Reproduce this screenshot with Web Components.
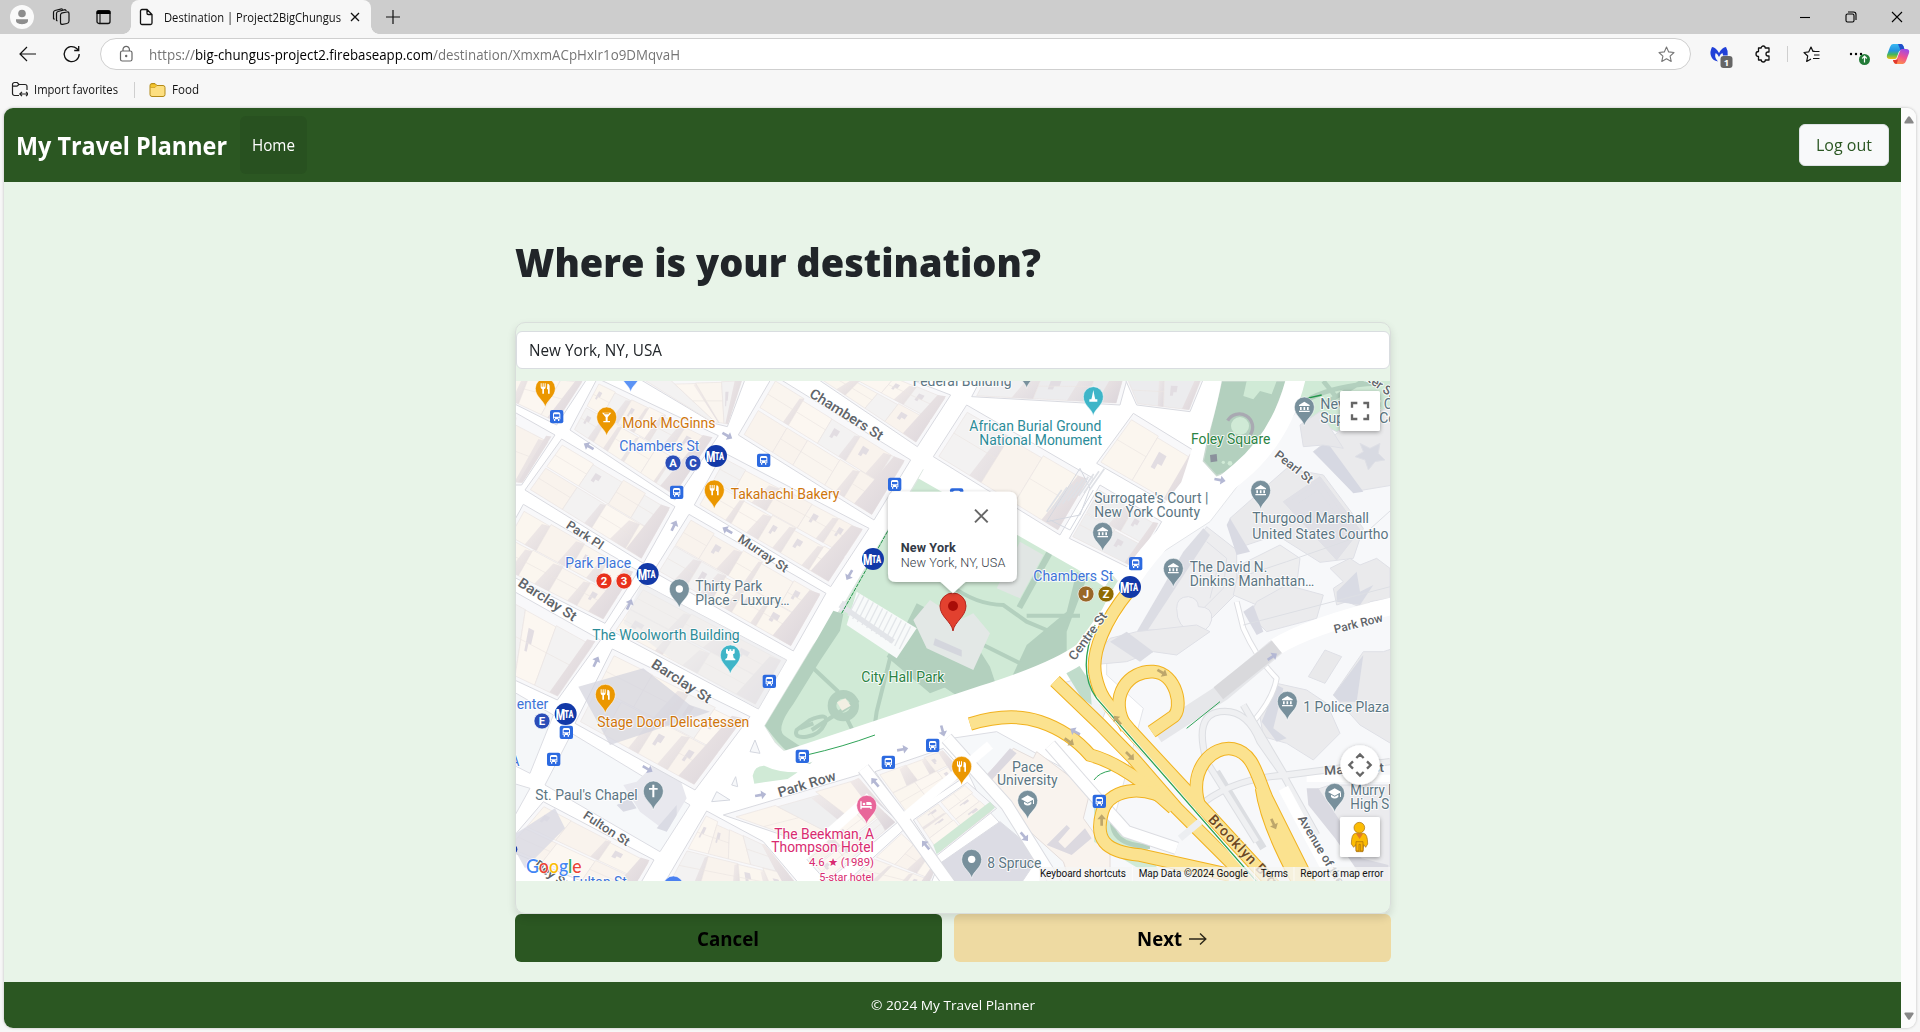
<!DOCTYPE html>
<html lang="en">
<head>
<meta charset="utf-8">
<title>Destination | Project2BigChungus</title>
<style>
html,body{margin:0;height:100%;overflow:hidden;background:#f7f7f7}
body{font-family:"Open Sans","Noto Sans",sans-serif;color:#212529}
</style>
</head>
<body>
<browser-window></browser-window>
<script>
const define = (name, html, ready) => customElements.define(name, class extends HTMLElement {
  connectedCallback() {
    if (this.shadowRoot) return;
    this.attachShadow({mode: 'open'}).innerHTML = html;
    if (ready) ready.call(this, this.shadowRoot);
  }
});

/* Text run condensed or widened to an exact width. */
customElements.define('fit-text', class extends HTMLElement {
  connectedCallback() {
    if (this.shadowRoot) return;
    this.attachShadow({mode: 'open'}).innerHTML =
      '<style>:host{display:inline-block;white-space:pre;flex:none}span{display:inline-block;transform-origin:0 50%}</style><span><slot></slot></span>';
    requestAnimationFrame(() => this.fit());
    this.fit();
  }
  fit() {
    const w = +this.getAttribute('w'), s = this.shadowRoot.querySelector('span');
    s.style.transform = 'none';
    const n = s.getBoundingClientRect().width;
    if (!w || !n) return;
    s.style.transform = 'scaleX(' + w / n + ')';
    this.style.width = w + 'px';
  }
});

define('tab-strip', `
<style>
:host{display:flex;height:34px;background:#cdcdcd;align-items:center;box-sizing:border-box;font-size:12px;color:#111}
svg{display:block;flex:none}
.left{display:flex;width:131px;align-items:center;padding-left:10px;box-sizing:border-box}
.left svg+svg{margin-left:16px}
.tab{position:relative;display:flex;align-items:center;width:240px;height:34px;background:#f7f7f7;border-radius:8px 8px 0 0;box-sizing:border-box;padding-left:8px}
.tab:before,.tab:after{content:"";position:absolute;bottom:0;width:8px;height:8px}
.tab:before{left:-8px;background:radial-gradient(circle at 0 0,transparent 7.5px,#f7f7f7 8px)}
.tab:after{right:-8px;background:radial-gradient(circle at 100% 0,transparent 7.5px,#f7f7f7 8px)}
.tab fit-text{margin-left:10px}
.x{margin-left:8px}.plus{margin-left:14px}
.win{margin-left:auto;display:flex;padding-right:14px;gap:28px}
</style>
<div class="left">
<svg width="24" height="24"><circle cx="12" cy="12" r="12" fill="#fafafa"/><circle cx="12" cy="8.500" r="3.800" fill="#8d8d8d"/><path d="M6 14.200h12v1.600c0 2-2.700 3.400-6 3.400s-6-1.400-6-3.400z" fill="#8d8d8d"/></svg>
<svg width="24" height="20" viewBox="0 0 24 20" fill="none" stroke="#111" stroke-width="1.200"><rect x="10.500" y="5" width="8.500" height="11.500" rx="2" transform="skewY(-10) translate(0 3)"/><path d="M7.500 14l-1-.500V6.500a2 2 0 0 1 1.500-2l7-1.800 1.500 1"/><path d="M4.500 12.500L3.500 11.500V5.500A2 2 0 0 1 5 3.500l6.500-1.700 1.500.700"/></svg>
<svg width="16" height="16" style="margin-left:21px"><rect x="2" y="2" width="13" height="12.500" rx="2" fill="none" stroke="#111" stroke-width="1.300"/><path d="M1.500 2.500q0-1.200 2-1.200h10q2 0 2 1.200V5H1.500z"/><path d="M5 5v9" stroke="#111" stroke-width="1.100"/></svg>
</div>
<div class="tab">
<svg width="15" height="18" fill="none" stroke="#111" stroke-width="1.300"><path d="M1.500 3a1.500 1.500 0 0 1 1.500-1.500h5l5 5V15a1.500 1.500 0 0 1-1.500 1.500H3A1.500 1.500 0 0 1 1.500 15zM8 1.500v3.700a1.300 1.300 0 0 0 1.300 1.300H13"/></svg>
<fit-text w="177">Destination | Project2BigChungus</fit-text>
<svg class="x" width="12" height="12" stroke="#111" stroke-width="1.300"><path d="M2 2l8 8M10 2l-8 8"/></svg>
</div>
<svg class="plus" width="16" height="16" stroke="#111" stroke-width="1.200"><path d="M8 1v14M1 8h14"/></svg>
<div class="win">
<svg width="18" height="16" stroke="#000" stroke-width="1.100"><path d="M4 8.500h10"/></svg>
<svg width="18" height="16" fill="none" stroke="#000" stroke-width="1.100"><rect x="4" y="5" width="8" height="8" rx="1.500"/><path d="M6 3h5.500a2.500 2.500 0 0 1 2.500 2.500V11"/></svg>
<svg width="18" height="16" stroke="#000" stroke-width="1.100"><path d="M4 3l10 10M14 3L4 13"/></svg>
</div>`);

define('address-bar', `
<style>
:host{display:flex;height:40px;align-items:center;padding:0 0 0 18px;background:#f7f7f7;font-size:14px;color:#757575}
svg{display:block;flex:none;overflow:visible}
.field{display:flex;flex:none;align-items:center;margin-left:19px;width:1591px;height:32px;box-sizing:border-box;border:1px solid #cfcfcf;border-radius:16px;background:#fff;padding:0 15px 0 17px}
.field .host{color:#000}
.lock{margin-right:14px}.star{margin-left:auto}
.tools{display:flex;align-items:center;margin-left:16px;flex:1}
i{width:1px;height:16px;background:#cfcfcf}
</style>
<svg width="20" height="18" fill="none" stroke="#111" stroke-width="1.200"><path d="M18 9H2.500M9 2L2 9l7 7"/></svg>
<svg width="18" height="18" fill="none" stroke="#111" stroke-width="1.300" style="margin-left:25px"><path d="M16.200 9a7.500 7.500 0 1 1-2.500-5.500l1.800 1.700M15.700 1v4.500h-4.500"/></svg>
<div class="field">
<svg class="lock" width="17" height="18" fill="none" stroke="#666" stroke-width="1.200" viewBox="0 0 17 18"><rect x="2.500" y="6" width="11.500" height="10" rx="1.800"/><path d="M5 6V4.500a3.200 3.200 0 0 1 6.400 0V6"/><circle cx="8.200" cy="11" r=".6" fill="#666"/></svg>
<fit-text w="46">https://</fit-text><fit-text class="host" w="238">big-chungus-project2.firebaseapp.com</fit-text><fit-text w="247">/destination/XmxmACpHxIr1o9DMqvaH</fit-text>
<svg class="star" width="17" height="17" viewBox="0 0 17 17" fill="none" stroke="#777" stroke-width="1.100"><path d="M8.500 1l2.200 4.900 5.300.600-3.900 3.600 1.100 5.300-4.700-2.700-4.700 2.700 1.100-5.300L1 6.500l5.300-.600z" stroke-linejoin="round"/></svg>
</div>
<div class="tools">
<svg width="24" height="24" viewBox="0 0 24 24"><path d="M5 5q4 .5 7 6 3-5.500 7-6 2 3 1.700 8.500h-4.700q0-1.500-.700-2.500-2 1-3.300 4-1.300-3-3.300-4-2 4.500 2.300 8.500-5.500-1-7-5.500Q2.500 10 5 5z" fill="#2140d8"/><rect x="13.500" y="14" width="12" height="12" rx="3" fill="#666"/><text x="19.500" y="23.500" text-anchor="middle" font-size="9.500" font-weight="700" fill="#fff">1</text></svg>
<svg width="17" height="18" viewBox="0 0 17 18" fill="none" stroke="#111" stroke-width="1.300" style="margin-left:24px"><path d="M3.500 3h2.700a2 2 0 0 1 4 0H14v4h-1a2 2 0 0 0 0 4h1v4h-3.700a2 2 0 0 1-4 0H3.500v-3.500a2.500 2.500 0 0 1 0-5z" stroke-linejoin="round"/></svg>
<i style="margin-left:15px"></i>
<svg width="18" height="17" viewBox="0 0 18 17" fill="none" stroke="#111" stroke-width="1.200" style="margin-left:15px"><path d="M11.500 5L10 5.500 8 1 5.800 5.800 1 6.500l3.700 3.500-1 5.500 4.300-2.500M10.500 5.500h6M11 9h5.500M10 12.500h6.500" stroke-linejoin="round"/></svg>
<svg width="24" height="24" viewBox="0 0 24 24" style="margin-left:26px"><circle cx="4" cy="12" r="1.200"/><circle cx="9" cy="12" r="1.200"/><circle cx="14" cy="12" r="1.200"/><circle cx="17.500" cy="17.500" r="5.500" fill="#237b38"/><path d="M17.500 20.500v-6M15.200 16.500l2.300-2.300 2.300 2.300" stroke="#fff" stroke-width="1.200" fill="none"/></svg>
<svg width="24" height="24" viewBox="0 0 24 24" style="margin-left:15px"><defs><linearGradient id="a" x1="0" y1="0" x2="0" y2="1"><stop stop-color="#39b9f2"/><stop offset=".45" stop-color="#2493df"/><stop offset=".7" stop-color="#47b65b"/><stop offset="1" stop-color="#f0c30e"/></linearGradient><linearGradient id="b" x1=".7" y1="0" x2=".3" y2="1"><stop stop-color="#9c4be8"/><stop offset=".5" stop-color="#f0518f"/><stop offset="1" stop-color="#ff9446"/></linearGradient></defs><path d="M7 2h8q2 0 3 4l1 2h-3q-3 0-4 4l-1.500 4q-.500 1-2 1H4q-4 0-3-4L4 5q1-3 3-3z" fill="url(#a)"/><path d="M12 2h3q2 0 3 4l.500 2h-4z" fill="#214fc9"/><path d="M17 22H10q-2 0-3-4h2q2 0 3-4l2-5q.500-2 2-2h4q4 0 3 4l-3 8q-1 3-3 3z" fill="url(#b)"/><path d="M7 18h3q1.500 0 2-1l-1 4.500q-3 1-4-3.500z" fill="#e2382f"/></svg>
</div>`);

define('favorites-bar', `
<style>
:host{display:flex;height:34px;align-items:center;padding-left:11px;background:#f7f7f7;font-size:12px;color:#111;box-sizing:border-box;padding-bottom:3px}
svg{flex:none;margin-right:6px}i{width:1px;height:16px;background:#cfcfcf;margin:0 14px 0 16px}
</style>
<svg width="17" height="17" fill="none" stroke="#222" stroke-width="1.200"><path d="M8 14.500H3.500a2 2 0 0 1-2-2v-9a2 2 0 0 1 2-2h2.700L8 3.500h6a2 2 0 0 1 2 2V9M1.500 5.200H6l2-1.700M9 13h8M11 10.800L8.800 13l2.200 2.200M15 10.800l2.200 2.200-2.200 2.200"/></svg>
<fit-text w="84">Import favorites</fit-text><i></i>
<svg width="17" height="16"><path d="M1 3.500A2 2 0 0 1 3 1.500h3l2 2h6a2 2 0 0 1 2 2v7a2 2 0 0 1-2 2H3a2 2 0 0 1-2-2z" fill="#fddf80" stroke="#b38a18"/><path d="M1.500 5.500V3.500A1.500 1.500 0 0 1 3 2h3l1.700 1.700L6 5.500z" fill="#f4c62f" stroke="#c39519" stroke-width=".6"/></svg>
<fit-text w="27">Food</fit-text>`);

define('planner-header', `
<style>
:host{display:flex;height:74px;flex:none;background:#2b5722;align-items:center;padding:0 12px 0 12px;box-sizing:border-box;color:#fff}
.brand{font-size:25px;font-weight:700}
nav{margin-left:13px;width:67px;height:58px;border-radius:6px;background:#285120;display:flex;align-items:center;justify-content:center;font-size:15.500px}
button{margin-left:auto;width:90px;height:42px;border:1px solid #dfe3e6;border-radius:6px;background:#f8f9fa;color:#2b5722;font:500 16px "Open Sans";padding:0}
</style>
<fit-text class="brand" w="211">My Travel Planner</fit-text><nav><fit-text w="43">Home</fit-text></nav>
<button><fit-text w="56">Log out</fit-text></button>`);

define('destination-card', `
<style>
:host{display:flex;flex-direction:column;width:876px;height:592px;box-sizing:border-box;border:1px solid #d9dedb;border-radius:10px;box-shadow:0 4px 9px rgba(0,0,0,.12);padding-top:8px;position:relative;z-index:1}
.input{height:38px;box-sizing:border-box;border:1px solid #d9dde0;border-radius:6px;background:#fff;display:flex;align-items:center;padding-left:12px;font-size:15.500px;margin-bottom:12px;flex:none}
</style>
<div class="input"><fit-text w="133">New York, NY, USA</fit-text></div><city-map></city-map>`);

define('planner-page', `
<style>
:host{display:flex;flex-direction:column;flex:1;background:#e8f4e8}
main{flex:1;display:flex;flex-direction:column;align-items:center}
h1{width:876px;margin:55px 0 0;height:85px;font-size:39.500px;line-height:50px;font-weight:800}
.row{width:876px;display:flex;gap:12px;height:48px}
.btn{display:flex;align-items:center;justify-content:center;border-radius:6px;font-size:20px;font-weight:700;color:#000;box-sizing:border-box}
.cancel{width:427px;background:#2b5722}.next{flex:1;background:#eedaa2;gap:7px}
.next svg{margin-top:2px}
footer{height:46px;background:#2b5722;color:#fff;display:flex;align-items:center;justify-content:center;font-size:13.500px}
</style>
<planner-header></planner-header>
<main><h1><fit-text w="526">Where is your destination?</fit-text></h1>
<destination-card></destination-card>
<div class="row"><div class="btn cancel"><fit-text w="62">Cancel</fit-text></div>
<div class="btn next"><fit-text w="45">Next</fit-text><svg width="18" height="14" fill="none" stroke="#2b2618" stroke-width="1.400"><path d="M0 7h16.500M11 1.500L16.800 7 11 12.500"/></svg></div></div></main>
<footer><fit-text w="164">© 2024 My Travel Planner</fit-text></footer>`);

define('browser-window', `
<style>
:host{display:flex;flex-direction:column;height:1032px;width:1920px;background:#f7f7f7}
.view{display:flex;margin:0 4px;height:920px;border-radius:9px;overflow:hidden;box-shadow:0 0 3px rgba(0,0,0,.25)}
.bar{width:15px;background:#fcfcfc;display:flex;flex-direction:column;justify-content:space-between;align-items:center;padding:8px 0;box-sizing:border-box}
</style>
<tab-strip></tab-strip><address-bar></address-bar><favorites-bar></favorites-bar>
<div class="view"><planner-page></planner-page><div class="bar">
<svg width="10" height="8"><path d="M4 .8q1-1 2 0L9.500 6q.500 1.500-1 1.500h-7Q0 7.500.500 6z" fill="#888"/></svg>
<svg width="10" height="8"><path d="M4 7.200q1 1 2 0L9.500 2Q10 .5 8.500.5h-7Q0 .5.500 2z" fill="#888"/></svg></div></div>`);

/* The map is drawn in units of a third of a pixel. */
const lerp = (a, b, t) => [a[0] + (b[0] - a[0]) * t, a[1] + (b[1] - a[1]) * t];
const pts = p => p.map(q => q.map(v => v.toFixed(1)).join(',')).join(' ');
const CREAM = ['#faf5ef', '#fbf6ef', '#f9f3ed', '#fcf7f1', '#f3f2f2'];
const GREY = ['#eeeeef', '#ececee', '#f0f0f1', '#ebebed'];
function block(q, n, m, pal, seed) {
  let r = seed * 7919 + 13;
  const rnd = () => (r = (r * 1103515245 + 12345) % 2147483648) / 2147483648;
  const at = (u, v) => lerp(lerp(q[0], q[1], u), lerp(q[3], q[2], u), v);
  let s = `<polygon points="${pts(q)}" fill="#f8f8fa" stroke="#d9dae0" stroke-width="3"/>`;
  for (let j = 0; j < m; j++) {
    let u = .03;
    for (let i = 0; i < n; i++) {
      const w = .94 / n * (.75 + rnd() * .5), u1 = i === n - 1 ? .97 : Math.min(.97, u + w);
      const v0 = .05 + j * .9 / m, v1 = v0 + .9 / m, d = rnd() * .12 * (v1 - v0);
      const c = pal[Math.floor(rnd() * pal.length)];
      s += `<polygon points="${pts([at(u, v0 + d), at(u1, v0 + d), at(u1, v1), at(u, v1)])}" fill="${c}" stroke="#eae4e2" stroke-width="2"/>`;
      const k = (u1 - u) * (.1 + rnd() * .2);
      if (rnd() > .35) s += `<polygon points="${pts([at(u1 - k, v0 + d + .03), at(u1, v0 + d), at(u1, v1), at(u1 - k * 1.6, v1)])}" fill="url(#shade)" opacity=".75"/>`;
      if (rnd() > .6) { const a = u + (u1 - u) * .2, b = v0 + (v1 - v0) * .3, e = (u1 - u) * .2, f = (v1 - v0) * .2;
        s += `<polygon points="${pts([at(a, b), at(a + e, b), at(a + e, b + f), at(a + e * .5, b + f), at(a + e * .5, b + f * 1.6), at(a, b + f * 1.6)])}" fill="#e2dde2"/>`; }
      if (rnd() > .4) s += `<polyline points="${pts([at(u, (v0 + v1) / 2), at(u1, (v0 + v1) / 2)])}" stroke="#ebe5e3" stroke-width="2" fill="none"/>`;
      u = u1;
    }
  }
  /* Long shadow that the row throws on its eastern side. */
  s += `<polygon points="${pts([at(.9, .08), at(.97, .05), at(.97, .95), at(.84, .95)])}" fill="url(#shade)"/>`;
  return s;
}
const flat = (p, f, st = '#dcdde3') => `<polygon points="${p}" fill="${f}" stroke="${st}" stroke-width="3"/>`;

const blocks = [
  [[[-60,-20],[232,10],[140,150],[-60,50]],3,1,CREAM,1],
  [[[262,10],[625,182],[495,375],[180,165]],6,2,CREAM,2],
  [[[385,10],[710,0],[652,155],[612,145]],4,1,CREAM,3],
  [[[155,192],[495,395],[400,565],[45,345]],4,2,CREAM,4],
  [[[-60,70],[135,180],[35,330],[-60,330]],2,1,CREAM,5],
  [[[40,388],[385,588],[285,745],[-60,570]],4,2,CREAM,6],
  [[[790,0],[1202,255],[1092,435],[685,180]],5,2,CREAM,7],
  [[[640,232],[1077,460],[962,635],[553,390]],5,2,CREAM,8],
  [[[537,418],[948,655],[850,828],[430,590]],5,2,CREAM,9],
  [[[395,625],[830,855],[745,1002],[300,765]],3,2,CREAM,10],
  [[[307,822],[720,1025],[555,1245],[195,1045]],4,2,CREAM,11],
  [[[-40,620],[272,795],[142,975],[-40,890]],3,1,CREAM,12],
  [[[100,1280],[432,1455],[360,1580],[-20,1420]],3,2,CREAM,15],
  [[[1010,-60],[1322,60],[1222,215],[920,10]],4,2,CREAM,16],
  [[[1370,90],[1750,310],[1650,480],[1270,245]],3,1,CREAM,17],
  [[[1420,0],[1860,-20],[1830,90],[1385,65]],3,1,GREY,18],
  [[[1870,115],[2065,235],[1995,400],[1760,265]],2,1,CREAM,19],
  [[[1840,0],[2085,0],[2040,110],[1880,90]],2,1,GREY,20],
  [[[1770,330],[1955,440],[1870,585],[1678,490]],2,2,GREY,21],
  [[[590,1308],[760,1400],[930,1600],[460,1530]],4,2,CREAM,22],
  [[[640,1320],[1052,1198],[1165,1335],[860,1395]],3,1,['#efeff0','#fbf5ee'],23],
  [[[870,1430],[1090,1270],[1165,1340],[950,1520]],3,2,CREAM,24],
  [[[1095,1190],[1300,1120],[1372,1200],[1190,1322]],3,2,CREAM,25],
  [[[1372,1222],[1460,1300],[1280,1442],[1210,1335]],3,2,CREAM,26],
  [[[1188,1358],[1285,1468],[1250,1560],[1000,1530]],3,2,CREAM,27],
].map(b => block(...b)).join('');

const plain = [
  flat('10,950 130,1020 60,1195 10,1170','#f5f7f9'),
  flat('185,1075 540,1290 450,1430 105,1230','#f6f8fa'),
  flat('10,1225 60,1240 10,1330','#f5f7f9'),
  flat('1640,930 1740,900 1760,960 1790,1000 1770,1050','#f2f4f6'),
  flat('1325,1090 1460,1070 1660,1180 1790,1330 1790,1530 1640,1530 1420,1290','#f6f8fa'),
  flat('1470,1340 1590,1440 1530,1530 1330,1530 1290,1465','#dcdce4'),
  flat('1790,640 2100,440 2270,220 2440,10 2660,10 2660,1530 1760,1530 1900,1000 1790,900','#f7f8fa','#e3e5e9'),
  flat('2355,10 2660,10 2660,90 2480,170 2350,100','#d0ead6'),
  `<path d="M340 1230l40-10 60-60 70 50 20 60-60 100-80-60z" fill="#e8e8ee"/><path d="M320 1290l40-20 20 30-40 10zM440 1360l60-70v30l-30 50z" fill="#dadbe4"/>`
].join('');

/* Larger municipal buildings east of Centre Street. */
const civic = `
<g stroke="#dfe0e6" stroke-width="3" stroke-linejoin="round">
<path d="M2090 455l90 70 0 130-110 110h-160l80-170z" fill="#ededef"/><path d="M2020 530l60-70 20 20-190 290h-30z" fill="#dcdde4" stroke="none"/>
<path d="M2090 500l60 50-10 90-60 60M2070 560l50 30-20 80" fill="none"/>
<path d="M2000 700q0-35 35-35 30 5 30 30 45 0 40 40-10 40-55 35-50-10-50-70z" fill="#f2f2f4"/>
<path d="M2160 430l170-150 110 20 120 160-30 90-100 12-130-82-120 40z" fill="#eaeaec"/><path d="M2160 430l60 100-40 10-30-90z" fill="#d9dae3" stroke="none"/><path d="M2320 380l110-75 120 160-70 90z" fill="#e0e0e6"/><path d="M2345 375l85-55 90 130M2365 385l60-40 80 110" fill="none"/>
<path d="M2410 230l90-70 150-70v240l-120 20z" fill="#eaeaec"/><path d="M2410 230l40-30 110 150-30 5z" fill="#d6d8e2" stroke="none"/><path d="M2550 205l30 15 30-15-5 30 20 20-30 5-20 25-10-30-30-10 25-15z" fill="#d8dae2"/>
<path d="M2370 150l60-40 70 110-60-10-60 5z" fill="#e7e7ea"/>
<path d="M2190 570l120-60 60 40-10 80-120 60-70-30z" fill="#eeeeef"/><path d="M2240 680l90-50 110 30-20 70-150 40-50-50z" fill="#ebebed"/><path d="M2230 690l30 80-20 10-40-70z" fill="#d9dae3" stroke="none"/>
<path d="M2460 580l60-30 30 20 50-20 40 30v90l-60 10-20 20-50-20-30 10-10-50 30-20z" fill="#eaeaec"/><path d="M2480 650l60-60 10 60 40-20-40 60-70-10z" fill="#d9dbe4" stroke="none"/>
<path d="M1740 870l60-80 80-20 180-20 40 20-100 70-70-10-80 30z" fill="#ebebed"/><path d="M1800 800l50-30 80 60-40 30z" fill="#dcdde4" stroke="none"/>
<path d="M2395 905l50-80 50 20-50 80z" fill="#e9e9eb"/><path d="M2470 960l90-130 60 0 30-10v290l-100-60z" fill="#eaeaec"/><path d="M2470 960l90-120-20 140-50 0z" fill="#d8dae3" stroke="none"/>
<path d="M2300 925l90 20 60 40 40 90-80 80-80-50-70-20-10-60z" fill="#ebebed"/><path d="M2255 1040l45-110 20 10-30 120 40 30-30 10z" fill="#d8dae3" stroke="none"/>
<path d="M2400 1250l60-20h180v290l-80-20-40-130z" fill="#ebebee"/><path d="M2390 1240l35 0 60 90 70 120 80 20v50h-70l-90-130-80-100z" fill="#d9d9e1" stroke="none"/>
</g>
<path d="M1430 1200l80-80 60 30 10-20 160 120-20 80 80 110v80h-120l-20-60-100-90z" fill="#f9f3ee" stroke="#e4dddb" stroke-width="3"/>
<path d="M1430 1200l70-80 20 15-75 80zM1610 1410l60-60 10 10-35 40 20 20 60-60 20 30-60 50z" fill="#dcd9e0"/>`;

const park = `
<path d="M1240 285L1385 370 1630 508 1810 605 1850 650 1780 740 1640 880 1450 965 880 1153Q845 1152 795 1100L765 1052 910 812 1000 692Z" fill="#d0ead6" stroke="#dce6e0" stroke-width="4"/>
<g fill="#b3d0be"><path d="M910 812l60-105 30 10-10 50-60 90-80 130q-60 80-20 100l90 60-20 20q-60-10-135-115z"/><path d="M1180 765l40-80 120 60 30 20 70 110 20 60-150 0-50 20-130-110z"/><path d="M1340 830l130 115-110 30-120-80-90-40z"/><path d="M1700 590l30 20-60 160 0 80-180 90 60-130 120-100z"/><path d="M1620 510l16 12-100 180-16-8z"/></g>
<g fill="none" stroke="#b3d0be" stroke-width="12"><path d="M910 880l75 70M1140 850l-40 160-10 70M1045 975l-140 90M870 1060l40-15M1010 1030l30 60M1320 630q80 60 160 60l70 50 60 25M1550 722h160M1360 780l240 120" /><circle cx="1000" cy="992" r="34" stroke-width="26"/><path d="M900 1035q60-25 45 10t-55 40-30-20z"/></g>
<path d="M981 982l25-12 16 22-26 15z" fill="#f2efe3"/>
<path d="M1210 735l50-60 90 60 40-20 50 60-50 110-140-65z" fill="#e3e8e6"/><path d="M1275 790l80 35 0 20-85-35z" fill="#d4d6dd"/><path d="M1530 500l70 40-70 130-70-30z" fill="#e1e6e4"/>
<g fill="#f8fafa"><path d="M1040 650l180 110-60 90-150-100z"/></g>
<g stroke="#e3e6e9" stroke-width="4">${Array.from({length: 12}, (_, i) => `<path d="M${1048 + i * 14} ${655 + i * 9}l-34 68"/>`).join('')}</g>
<path d="M990 690l160 110M1005 680l-10 30" stroke="#e3e5e9" stroke-width="16" fill="none"/>
<path d="M995 715L1135 465" stroke="#22964a" stroke-width="3" stroke-dasharray="12 3"/>
<path d="M2135 18H2330L2280 150Q2240 230 2165 285L2120 302 2080 258 2092 200Z" fill="#b3d0be" stroke="#cbdad1" stroke-width="4"/>
<path d="M2210 18h90l-15 40-35-10-20 25-30-10z" fill="#d0ead6"/><circle cx="2190" cy="153" r="27" fill="#d0ead6"/><path d="M2153 137a40 40 0 1 1 68 42" fill="none" stroke="#a9a9b2" stroke-width="10"/><path d="M2100 240l20-3 2 22-20 3z" fill="#8b919c"/><circle cx="2160" cy="265" r="7" fill="#d0ead6"/><circle cx="2140" cy="262" r="5" fill="#d0ead6"/>
<path d="M2400 70q80-40 200-45M2440 18l40 50M2560 18l-120 70" stroke="#b3d0be" stroke-width="14" fill="none"/><path d="M2390 70l45-10" stroke="#22964a" stroke-width="4"/>
<path d="M1270 1410l170-130 15 18-175 140z" fill="#cfe8d5"/><path d="M1752 1280l20 0 60 40 80 100 40 80-50-10-150-90z" fill="#d0ead6"/><path d="M1810 1320q-20 90 110 95" fill="none" stroke="#b3d0be" stroke-width="14"/>
<path d="M1660 880l40-20 40 60 5 70-30-20z" fill="#c0dccb"/>`;

const whites = `<g fill="none" stroke-linejoin="round">
<path d="M1240 285L1720 560 1800 612M2360 0Q2320 180 2190 290L2000 450Q1880 560 1800 720L1720 830Q1640 890 1420 960L600 1232" stroke="#fff" stroke-width="58"/>
<path d="M2120 0Q2100 120 2030 330L1960 420" stroke="#fff" stroke-width="36"/>
<path d="M1560 935Q1700 1000 1790 1080" stroke="#fff" stroke-width="64"/>
<path d="M2660 690Q2400 750 2290 820" stroke="#fff" stroke-width="52"/>
<path d="M2390 1210H2660" stroke="#fff" stroke-width="22"/>
<path d="M1310 1090L1490 1290 1640 1530" stroke="#dcdde2" stroke-width="40"/><path d="M1310 1090L1490 1290 1640 1530" stroke="#fff" stroke-width="34"/>
<path d="M1060 1180L1180 1335 1320 1530" stroke="#dcdde2" stroke-width="40"/><path d="M1060 1180L1180 1335 1320 1530" stroke="#fff" stroke-width="34"/>
<path d="M1620 1110L1760 1270 1850 1370 2000 1420" stroke="#dcdde2" stroke-width="40"/><path d="M1620 1110L1760 1270 1850 1370 2000 1420" stroke="#fff" stroke-width="34"/>
<path d="M1180 1330L1440 1110" stroke="#fff" stroke-width="28"/><path d="M860 1460L1080 1265" stroke="#fff" stroke-width="28"/>
<path d="M2180 680l20 80q40 90 100 150-10 60-70 130" stroke="#dedfe3" stroke-width="18"/><path d="M2180 680l20 80q40 90 100 150-10 60-70 130" stroke="#fff" stroke-width="12"/>
<path d="M1940 1080L2140 950 2300 815" stroke="#e6e7ea" stroke-width="52"/><path d="M2125 955L2300 815" stroke="#d9d9dc" stroke-width="46"/>
<path d="M2240 1400L2090 1160Q2050 1020 2130 1010T2250 1100L2320 1200 2420 1380M2060 1300Q2160 1210 2330 1200L2640 1160M2200 990L2330 1210M2260 1420L2120 1190" stroke="#dcdee2" stroke-width="22"/>
<path d="M2240 1400L2090 1160Q2050 1020 2130 1010T2250 1100L2320 1200 2420 1380M2060 1300Q2160 1210 2330 1200L2640 1160M2200 990L2330 1210" stroke="#eff0f2" stroke-width="16"/>
<path d="M2320 1240l150 280" stroke="#fff" stroke-width="32"/>
<path d="M2180 610L2330 560 2560 480 2660 390M2200 750L2660 630" stroke="#dddfe4" stroke-width="3"/>
</g>
<path d="M728 1202q5-30 35-30 40 20 100 20l-30 20-100 14z" fill="#d0ead6"/>
<g fill="none" stroke="#d4d7df" stroke-width="3"><path d="M720 1130l15-35 15 40zM665 1230l12-25 6 30zM605 1280l15-30 40 25z" fill="#f7f8fa"/><path d="M1610 440l100-160 30 60-30 80zM1620 435l60 30 70-120"/></g>
<g stroke="#dfe1e6" stroke-width="5">${Array.from({length: 9}, (_, i) => `<path d="M${1610 + i * 16} ${410 - i * 8}l45-65"/>`).join('')}</g>`;

const hw = [
  'M1855 650C1790 730 1740 830 1757 905S1800 990 1860 1065L2060 1280 2300 1540',
  'M1635 918L1770 1048 1870 1150 2000 1300 2140 1440 2230 1530',
  'M1850 1060C1790 960 1860 885 1930 890S2020 1000 1990 1025L1925 1070',
  'M2070 1300C2030 1180 2110 1110 2170 1122S2240 1200 2270 1270L2400 1530',
  'M2255 1240Q2270 1350 2370 1530',
  'M1380 1047Q1500 1010 1590 1040T1740 1140Q1850 1170 1990 1300',
  'M1990 1290C1930 1230 1800 1230 1777 1310S1780 1430 1890 1440T2160 1500',
];
const highways = `<g fill="none" stroke-linecap="butt">${hw.map(d => `<path d="${d}" stroke="#f1b21f" stroke-width="41"/>`).join('')}${hw.map(d => `<path d="${d}" stroke="#fbe28f" stroke-width="35"/>`).join('')}
<path d="M1755 965L2240 1520" stroke="#fff" stroke-width="9"/><path d="M1755 750Q1700 890 1760 970L2240 1520" stroke="#2fa357" stroke-width="4"/><path d="M890 1140Q1000 1115 1095 1080M2030 1060l100-80M1752 1215q15-22 50-28" stroke="#2fa357" stroke-width="3"/>
<path d="M2010 1390l60-50" stroke="#eceef1" stroke-width="20"/></g>`;

const arrow = (x, y, a, c = '#b4b8d4') => `<path transform="translate(${x} ${y}) rotate(${a})" d="M-17-4H2v-9L17 0 2 13V4h-19z" fill="${c}"/>`;
const arrows = [[236,214,210],[652,182,30],[652,466,210],[492,452,-65],[358,688,-65],[258,860,-65],[413,1182,30],[752,1260,-10],[1018,600,120],[1178,1123,-10],[1298,1068,75],[1095,1222,230],[1247,1410,230],[1543,1385,50],[1695,1070,210],[2130,315,10],[2287,845,-35]].map(a => arrow(...a)).join('') +
  [[1678,1100,35],[1957,893,30],[1822,1035,230],[1860,1143,45],[2291,1347,65],[1775,1335,-90]].map(a => arrow(...a, '#bda66b')).join('');

const icons = {
  fork: '<path d="M-14-15v12q0 5 5 6v13h5V3q5-1 5-6v-12h-3v10h-3v-10h-3v10h-3v-10zM6-14q8 0 7 12v18H8V3H5z"/>',
  drink: '<path d="M-14-13h28L3 1v11h7v4h-20v-4h7V1zM-6-8h12l2-3H-8z" fill-rule="evenodd"/>',
  court: '<path d="M-16-6L0-16l16 10v3h-32zM-13 0h5v9h-5zM-2.500 0h5v9h-5zM8 0h5v9H8zM-16 11h32v4h-32z"/>',
  dot: '<circle r="11"/>',
  cross: '<path d="M-3-19h6v10h10v5H3v23h-6V-4h-10v-5h10z"/>',
  grad: '<path d="M-20-4L0-15 20-4 0 7zM-11 4v7Q0 20 11 11V4L0 10zM16-2h3v13h-3z"/>',
  castle: '<path d="M-13-17h6v5h4v-5h6v5h4v-5h6v12l-5 3 2 11 5 3v4h-30v-4l5-3 2-11-5-3z"/>',
  bed: '<path d="M-19-12h4V2h30v-6q0-6-6-6H-1V-1h16v12h-4V7h-26v5h-4z"/><circle cx="-8" cy="-4" r="4"/>',
  tower: '<path d="M0-20l4 20 2 8h6v7h-24V8h6l2-8z"/>', none: ''
};
const pin = ([x, y, c, i]) => `<g transform="translate(${x} ${y})"><path d="M0 57C-4 36-30 26-30 0A30 30 0 1 1 30 0C30 26 4 36 0 57z" fill="${c}" stroke="#fff" stroke-opacity=".8" stroke-width="2"/><g fill="#fff">${icons[i]}</g></g>`;
const O = '#eb9700', S = '#78909c', T = '#3fb5c8';
const pins = [[106,40,O,'fork'],[290,126,O,'drink'],[613,345,O,'fork'],[508,642,S,'dot'],[1750,65,T,'tower'],[2383,96,S,'court'],[2252,346,S,'court'],[1778,472,S,'court'],[1990,580,S,'court'],[661,840,T,'castle'],[286,958,O,'fork'],[430,1248,S,'cross'],[1070,1291,'#e8669a','bed'],[1355,1174,O,'fork'],[1553,1276,S,'grad'],[1385,1453,S,'dot'],[2332,979,S,'court'],[2474,1255,S,'grad'],[1550,-17,S,'none'],[362,-6,'#5b93f5','none'],[490,1533,'#4a80f0','dot']].map(pin).join('');
const buses = [[140,125],[761,256],[500,352],[1154,328],[1340,360],[1877,566],[778,919],[169,1072],[131,1153],[877,1144],[1135,1162],[1268,1111],[1768,1279]].map(([x, y]) => `<g transform="translate(${x} ${y})"><rect x="-20" y="-20" width="40" height="40" rx="6" fill="#2c6ae0"/><path d="M-11-8q0-5 5-5H6q5 0 5 5V8H8v5H4V8H-4v5H-8V8h-3zM-8-7v7H8v-7zM-7 3a2 2 0 1 0 .100 0M7 3a2 2 0 1 0 .100 0" fill="#fff" fill-rule="evenodd"/></g>`).join('');
const mtas = [[618,243],[413,597],[1089,552],[1860,636],[167,1017]].map(([x, y]) => `<circle cx="${x}" cy="${y}" r="33" fill="#1239a8"/><g font-weight="900" fill="#fff" transform="translate(${x} ${y})"><text x="-30" y="17" font-size="44" textLength="28" lengthAdjust="spacingAndGlyphs">M</text><text x="-4" y="13" font-size="34" textLength="28" lengthAdjust="spacingAndGlyphs">TA</text></g>`).join('');
const bullets = [[489,264,'#2b4db8','A'],[549,264,'#2b4db8','C'],[282,618,'#e8311c','2'],[342,618,'#e8311c','3'],[96,1038,'#2b4db8','E'],[1728,657,'#996728','J'],[1788,657,'#8f6b00','Z']].map(([x, y, c, t]) => `<circle cx="${x}" cy="${y}" r="24" fill="${c}" stroke="#fff" stroke-width="2"/><text x="${x}" y="${y + 12}" text-anchor="middle" font-size="34" font-weight="700" fill="#fff">${t}</text>`).join('');

const or = '#cf760c', bl = '#3d74d8', sl = '#5c7683', te = '#2c8c99', gr = '#2b8344', pk = '#d92b70';
const labels = [
  ['Monk McGinns',337,158,279,or],['Chambers St',328,228,240,bl],['Takahachi Bakery',662,372,326,or],['Park Place',166,578,197,bl],
  ['Thirty Park',556,648,201,sl],['Place - Luxury…',556,690,283,sl],['The Woolworth Building',247,795,442,te],['enter',20,1002,95,bl],
  ['Stage Door Delicatessen',262,1056,456,or],["St. Paul's Chapel",76,1275,307,sl],['A',2,1173,26,bl],['Federal Building',1208,32,297,sl],
  ['African Burial Ground',1378,168,396,te],['National Monument',1408,210,368,te],['Foley Square',2043,207,238,gr],
  ['New York C',2431,102,218,sl],['Supreme Co',2431,144,228,sl],["Surrogate's Court |",1753,384,342,sl],['New York County',1753,426,317,sl],
  ['Thurgood Marshall',2227,444,350,sl],['United States Courtho',2227,491,408,sl],['The David N.',2039,591,233,sl],['Dinkins Manhattan…',2039,633,374,sl],
  ['Chambers St',1570,617,240,bl],['City Hall Park',1054,921,249,gr],['1 Police Plaza',2380,1011,258,sl],['Murry B',2521,1260,138,sl],['High S',2521,1302,117,sl],
  ['Pace',1506,1191,94,sl],['University',1461,1230,182,sl],['8 Spruce',1432,1479,162,sl],['The Beekman, A',793,1391,299,pk],['Thompson Hotel',784,1431,308,pk],
  ['4.6 ★ (1989)',897,1473,195,pk,33],['5-star hotel',928,1517,164,pk,33],['Fulton St',187,1535,163,bl]
].map(([t, x, y, w, c, s = 42]) => `<text x="${x}" y="${y}" textLength="${w}" lengthAdjust="spacingAndGlyphs" font-size="${s}" fill="${c}">${t}</text>`).join('');
const streets = [
  ['Chambers St',1010,118,32,252,42],['Park Pl',225,480,33,125,37],['Murray St',760,535,34,172,38],['Barclay St',113,673,33,200,42],['Barclay St',515,918,33,205,42],
  ['Fulton St',290,1360,33,158,37],['Park Row',890,1227,-17,180,41],['Centre St',1733,783,-54,168,38],['Pearl St',2352,275,38,135,36],['Park Row',2545,745,-14,150,36],
  ['Avenue of the',2434,1425,59,235,36],['Dey St',125,1497,36,115,37],['Baxter St',2590,15,35,150,38],['Market St',2532,1182,-3,180,38]
].map(([t, x, y, a, w, s]) => `<text transform="translate(${x} ${y}) rotate(${a})" x="${-w / 2}" y="${s * .35}" textLength="${w}" font-size="${s}" font-weight="500" fill="#606469" lengthAdjust="spacingAndGlyphs">${t}</text>`).join('') +
  `<text transform="translate(2190 1415) rotate(46)" x="-125" y="15" textLength="275" font-size="42" font-weight="500" fill="#6d4923" stroke="#fdeab0">Brooklyn Brg</text>`;

define('city-map', `
<style>:host{display:block;height:500px;flex:none;font-family:Roboto,sans-serif}svg{display:block}</style>
<svg width="874" height="500" viewBox="516 381 874 500">
<defs><linearGradient id="shade" x1="0" y1="0" x2="1" y2="1"><stop stop-color="#f0e9e8"/><stop offset="1" stop-color="#d9d3d9"/></linearGradient>
<filter id="sh" x="-30%" y="-30%" width="160%" height="170%"><feDropShadow dx="0" dy="4" stdDeviation="7" flood-opacity=".35"/></filter></defs>
<g transform="translate(510 375) scale(.333333)">
<rect width="2700" height="1600" fill="#fff"/>
${plain}${civic}${blocks}
<path d="M205 935L400 880 540 990 600 1010 300 1110Z" fill="#d5d5df" opacity=".75"/><path d="M-5 1390l140-90 30 60-120 120z" fill="#d9dae4" opacity=".8"/>
<path d="M395 625L830 855 745 1002 480 850 340 745Z" fill="#ebebed" opacity=".6"/>
${park}${whites}${highways}${arrows}
<g stroke="#fff" stroke-width="6" stroke-opacity=".85" paint-order="stroke" stroke-linejoin="round">${streets}</g>
${buses}${pins}${mtas}${bullets}
<g stroke="#fff" stroke-width="6" stroke-opacity=".85" paint-order="stroke" stroke-linejoin="round">${labels}</g>
<circle cx="10" cy="1423" r="12" fill="#1239a8"/>
<path d="M1329 768C1325 740 1290 725 1290 693A39 39 0 1 1 1368 693C1368 725 1333 740 1329 768z" fill="#e2412f" stroke="#b3261e" stroke-width="3"/><circle cx="1329" cy="693" r="15" fill="#a90d08"/>
<path filter="url(#sh)" d="M1158 350H1497q24 0 24 24V597q0 24-24 24H1366L1329 655 1292 621H1158q-24 0-24-24V374q0-24 24-24z" fill="#fff"/>
<path d="M1395 404l38 38M1433 404l-38 38" stroke="#666" stroke-width="6"/>
<text x="1172" y="531" font-size="38" font-weight="700" textLength="165" fill="#333a46">New York</text>
<text x="1172" y="577" font-size="38" font-weight="300" textLength="314" fill="#333a46">New York, NY, USA</text>
<g filter="url(#sh)" fill="#fff"><rect x="2490" y="48" width="120" height="120" rx="5"/><circle cx="2550" cy="1170" r="59"/><rect x="2490" y="1326" width="120" height="120" rx="5"/></g>
<path d="M2526 98V84h16M2560 84h14v16M2574 118v14h-14M2542 132h-16v-14" fill="none" stroke="#666" stroke-width="7"/>
<path d="M2539 1149l11-11 11 11M2539 1191l11 11 11-11M2529 1159l-11 11 11 11M2571 1159l11 11-11 11" fill="none" stroke="#666" stroke-width="7"/>
<g stroke="#a56b0d" stroke-width="2"><path d="M2536 1375h25q12 2 12 32l-6 10-6-8-2 21h-20l-2-21-6 8-7-10q0-30 12-32z" fill="#fbbc04"/><circle cx="2548" cy="1358" r="16" fill="#fbbc04"/><path d="M2538 1376h21l-10 16z" fill="#e37b24" stroke="none"/><path d="M2538 1400h21v28h-8v-20h-4v20h-9z" fill="#f7b204"/></g>
<rect x="1588" y="1476" width="1060" height="42" fill="#f5f5f5" fill-opacity=".78"/>
<g font-size="30" fill="#111"><text x="1590" y="1505" textLength="258">Keyboard shortcuts</text><text x="1886" y="1505" textLength="328">Map Data ©2024 Google</text><text x="2252" y="1505" textLength="82">Terms</text><text x="2371" y="1505" textLength="249">Report a map error</text></g>
<path d="M1867 1476v42M2233 1476v42M2352 1476v42" stroke="#fff" stroke-width="2"/>
<text x="48" y="1493" font-family="Lato" font-weight="500" font-size="57" textLength="167" lengthAdjust="spacingAndGlyphs" stroke="#fff" stroke-width="4" paint-order="stroke"><tspan fill="#4285f4">G</tspan><tspan fill="#ea4335">o</tspan><tspan fill="#fbbc04">o</tspan><tspan fill="#4285f4">g</tspan><tspan fill="#34a853">l</tspan><tspan fill="#ea4335">e</tspan></text>
</g></svg>`);
</script>
</body>
</html>
